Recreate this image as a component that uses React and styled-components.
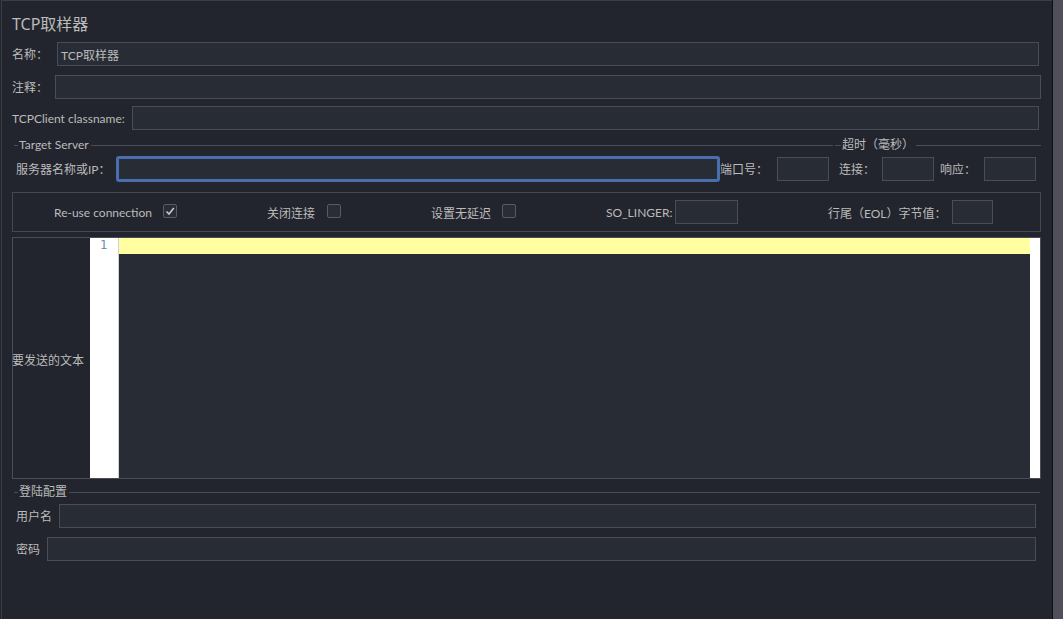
import React from "react";
import styled, { createGlobalStyle } from "styled-components";

const GlobalStyle = createGlobalStyle`
  html, body {
    margin: 0;
    padding: 0;
    background: #22252d;
  }
  body {
    font-family: "Lato", "Noto Sans CJK SC", sans-serif;
    font-size: 12px;
    color: #bbbbbb;
  }
`;

const Screen = styled.div`
  display: flex;
  width: 1063px;
  height: 619px;
  padding-left: 1px;
  box-sizing: border-box;
  overflow: hidden;
  background: #22252d;
`;

const Panel = styled.div`
  flex: 0 0 1051px;
  box-sizing: border-box;
  border-top: 1px solid #3a3d45;
  border-left: 1px solid #3a3d45;
  padding: 0 11px 0 10px;
`;

const Divider = styled.div`
  flex: 0 0 1px;
  background: #0e0f12;
`;

const ScrollTrack = styled.div`
  flex: 1;
  background: #4f5059;
`;

const Title = styled.div`
  font-family: "Noto Sans", "Noto Sans CJK SC", sans-serif;
  font-size: 16px;
  line-height: 20px;
  height: 20px;
  margin: 13px 0 8px;
`;

const Row = styled.div`
  display: flex;
  align-items: center;
  height: ${(p) => p.$h || 24}px;
  margin-top: ${(p) => p.$mt || 0}px;
  padding-left: ${(p) => p.$pl || 0}px;
  padding-right: ${(p) => p.$pr || 0}px;
`;

const Label = styled.div`
  flex: 0 0 ${(p) => p.$w}px;
  margin-left: ${(p) => p.$ml || 0}px;
  padding-top: 2px;
  white-space: nowrap;
  line-height: 16px;
`;

const Input = styled.input`
  box-sizing: border-box;
  flex: ${(p) => (p.$w ? `0 0 ${p.$w}px` : "1")};
  min-width: 0;
  height: 24px;
  margin: 0;
  padding: 0 3px;
  background: #282c34;
  border: 1px solid #4a4d55;
  color: #bbbbbb;
  font: inherit;
  outline: none;
`;

const FocusInput = styled(Input)`
  height: 26px;
  border: 3px solid #4a6db0;
  border-radius: 3px;
`;

const FieldRow = styled.div`
  display: flex;
  margin-top: 8px;
`;

const Group = styled.div`
  display: flex;
  flex-direction: column;
  flex: ${(p) => (p.$w ? `0 0 ${p.$w}px` : "1")};
  box-sizing: border-box;
  padding: 0 ${(p) => p.$pr || 0}px 0 ${(p) => p.$pl || 0}px;
`;

const Legend = styled.div`
  display: flex;
  align-items: center;
  height: 14px;
  line-height: 14px;
  margin-top: ${(p) => p.$mt || 0}px;
  margin-left: ${(p) => p.$ml || 0}px;
  margin-right: ${(p) => p.$mr || 0}px;
  &::before {
    content: "";
    flex: 0 0 ${(p) => p.$lead || 4}px;
    border-top: 1px solid #4b4e56;
    margin-right: 1px;
  }
  &::after {
    content: "";
    flex: 1;
    border-top: 1px solid #4b4e56;
    margin-left: 2px;
  }
`;

const Options = styled.div`
  display: flex;
  align-items: center;
  gap: 90px;
  box-sizing: border-box;
  height: 40px;
  margin-top: 10px;
  padding-left: 41px;
  border: 1px solid #45484f;
`;

const Option = styled.div`
  display: flex;
  align-items: center;
  justify-content: space-between;
  flex: 0 0 ${(p) => p.$w}px;
  white-space: nowrap;
`;

const Box = styled.span`
  display: inline-flex;
  align-items: center;
  justify-content: center;
  box-sizing: border-box;
  width: 14px;
  height: 14px;
  margin-top: -3px;
  border: 1px solid #585b63;
  border-radius: 2px;
  background: #2a2d35;
`;

const Check = ({ on }) => (
  <Box>
    {on && (
      <svg width="12" height="12" viewBox="0 0 12 12">
        <polyline
          points="2.5,6.5 5,9 9.8,3"
          fill="none"
          stroke="#c9c9c9"
          strokeWidth="1.6"
        />
      </svg>
    )}
  </Box>
);

const TextPanel = styled.div`
  display: flex;
  box-sizing: border-box;
  height: 242px;
  margin-top: 5px;
  border: 1px solid #4a4d55;
`;

const SideLabel = styled.div`
  display: flex;
  align-items: center;
  flex: 0 0 78px;
  margin-left: -1px;
  white-space: nowrap;
  padding-top: 2px;
`;

const Gutter = styled.div`
  flex: 0 0 29px;
  background: #ffffff;
  border-right: 1px solid #d0d0d0;
  font-family: "DejaVu Sans Mono", "Liberation Mono", monospace;
  font-size: 12px;
  line-height: 14px;
  color: #7488a8;
  padding-left: 10px;
  box-sizing: border-box;
`;

const Editor = styled.div`
  flex: 1;
  background: #282c34;
`;

const ActiveLine = styled.div`
  height: 16px;
  background: #ffffa2;
`;

const EditorEdge = styled.div`
  flex: 0 0 10px;
  background: #ffffff;
`;

export default function App() {
  return (
    <>
      <GlobalStyle />
      <Screen>
        <Panel>
          <Title>TCP取样器</Title>
          <Row $pr={2}>
            <Label $w={45}>名称：</Label>
            <Input defaultValue="TCP取样器" />
          </Row>
          <Row $mt={9}>
            <Label $w={43}>注释：</Label>
            <Input />
          </Row>
          <Row $mt={7} $pr={2}>
            <Label $w={120}>TCPClient classname:</Label>
            <Input />
          </Row>

          <FieldRow>
            <Group $w={823} $pl={2} $pr={2}>
              <Legend>Target Server</Legend>
              <Row $mt={4} $h={26} $pl={2}>
                <Label $w={100}>服务器名称或IP：</Label>
                <FocusInput $w={604} />
                <Label $w={57}>端口号：</Label>
                <Input $w={52} />
              </Row>
            </Group>
            <Group>
              <Legend $lead={6}>超时（毫秒）</Legend>
              <Row $mt={4} $h={26} $pl={4}>
                <Label $w={43}>连接：</Label>
                <Input $w={52} />
                <Label $w={44} $ml={6}>响应：</Label>
                <Input $w={52} />
              </Row>
            </Group>
          </FieldRow>

          <Options>
            <Option $w={123}>
              Re-use connection
              <Check on />
            </Option>
            <Option $w={74}>
              关闭连接
              <Check />
            </Option>
            <Option $w={85}>
              设置无延迟
              <Check />
            </Option>
            <Option $w={132}>
              SO_LINGER:
              <Input $w={63} />
            </Option>
            <Option $w={165}>
              行尾（EOL）字节值：
              <Input $w={41} />
            </Option>
          </Options>

          <TextPanel>
            <SideLabel>要发送的文本</SideLabel>
            <Gutter>1</Gutter>
            <Editor>
              <ActiveLine />
            </Editor>
            <EditorEdge />
          </TextPanel>

          <Legend $mt={6} $ml={2} $mr={1}>登陆配置</Legend>
          <Row $mt={5} $pl={4} $pr={5}>
            <Label $w={43}>用户名</Label>
            <Input />
          </Row>
          <Row $mt={9} $pl={4} $pr={5}>
            <Label $w={31}>密码</Label>
            <Input />
          </Row>
        </Panel>
        <Divider />
        <ScrollTrack />
      </Screen>
    </>
  );
}
